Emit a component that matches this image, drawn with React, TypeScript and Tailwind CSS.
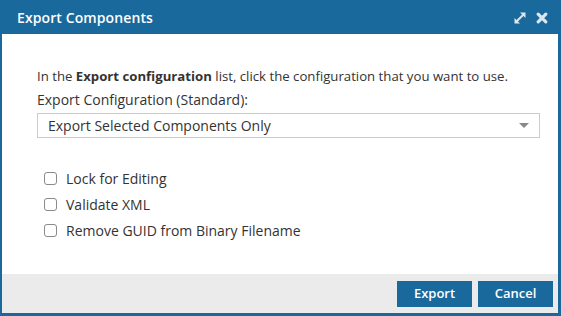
import React from "react";

function Expand() {
  return (
    <svg width="14" height="14" viewBox="0 0 14 14" fill="none">
      <path d="M3 11 L11 3" stroke="#dbe8f2" strokeWidth="2" />
      <path d="M7 1.5 H12.5 V7 Z" fill="#dbe8f2" />
      <path d="M1.5 7 V12.5 H7 Z" fill="#dbe8f2" />
    </svg>
  );
}

function Close() {
  return (
    <svg width="12" height="12" viewBox="0 0 12 12" fill="none">
      <path d="M2.2 2.2 L9.8 9.8 M9.8 2.2 L2.2 9.8" stroke="#dbe8f2" strokeWidth="3.2" strokeLinecap="round" />
    </svg>
  );
}

function Check({ label }: { label: string }) {
  return (
    <label className="flex items-center h-[25.75px]">
      <span className="ml-[7px] w-[13px] h-[13px] rounded-[3px] border border-[#8a8a8a] bg-white" />
      <span className="ml-[9px] text-[14px] text-[#333]">{label}</span>
    </label>
  );
}

export default function App() {
  return (
    <div
      className="w-[561px] h-[316px] flex flex-col bg-[#1a699c]"
      style={{ fontFamily: '"Open Sans", sans-serif' }}
    >
      <div className="h-[34px] flex items-center pl-[17px] pr-[13px] shrink-0">
        <span className="text-white font-semibold text-[14px] tracking-[0.1px]">Export Components</span>
        <div className="ml-auto flex items-center gap-[9px] mt-[1px]">
          <Expand />
          <Close />
        </div>
      </div>
      <div className="flex-1 ml-[2px] mr-[3px] mb-[3px] flex flex-col bg-white">
        <div className="flex-1 pl-[35px] pr-[18px] pt-[33px]">
          <div className="text-[13.2px] text-[#333] leading-[18px]">
            In the <b>Export configuration</b> list, click the configuration that you want to use.
          </div>
          <div className="text-[14px] text-[#333] leading-[18px] mt-[6px]">
            Export Configuration (Standard):
          </div>
          <div className="mt-[4px] h-[25px] border border-[#cccccc] flex items-center pl-[10px] pr-[10px]">
            <span className="text-[14px] text-[#333]">Export Selected Components Only</span>
            <span className="ml-auto w-0 h-0 border-l-[5px] border-r-[5px] border-t-[5px] border-l-transparent border-r-transparent border-t-[#888]" />
          </div>
          <div className="mt-[28px] flex flex-col">
            <Check label="Lock for Editing" />
            <Check label="Validate XML" />
            <Check label="Remove GUID from Binary Filename" />
          </div>
        </div>
        <div className="h-[39px] bg-[#ebebeb] flex items-center justify-end gap-[6px] pr-[5px] shrink-0">
          <button className="w-[75px] h-[26px] bg-[#1a699c] text-white font-semibold text-[13px]">Export</button>
          <button className="w-[75px] h-[26px] bg-[#1a699c] text-white font-semibold text-[13px]">Cancel</button>
        </div>
      </div>
    </div>
  );
}
